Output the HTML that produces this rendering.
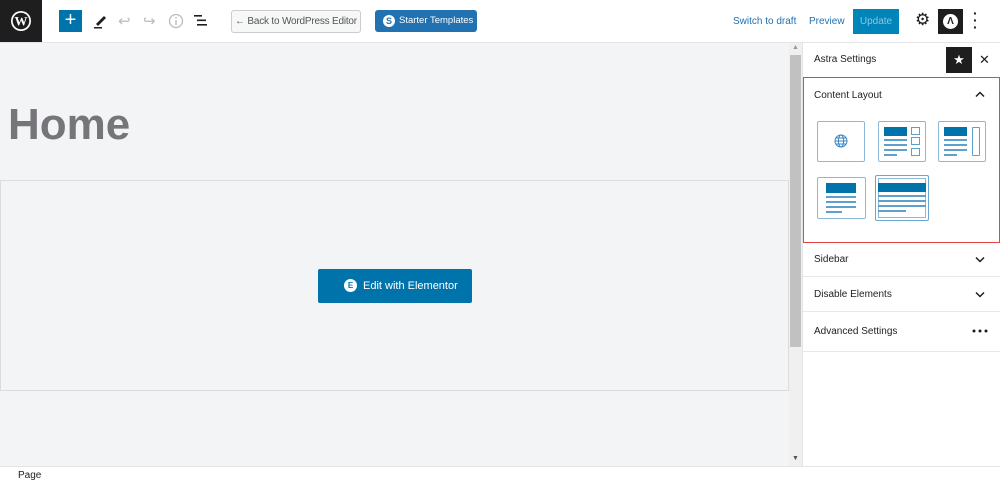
<!DOCTYPE html>
<html><head><style>
*{margin:0;padding:0;box-sizing:border-box}
body{width:1000px;height:484px;overflow:hidden;font-family:"Liberation Sans",sans-serif;background:#fff;position:relative;font-size:11px;color:#1e1e1e}
.a{position:absolute;white-space:nowrap}
.top{left:0;top:0;width:1000px;height:43px;background:#fff;border-bottom:1px solid #e2e4e7}
.lay{border:1px solid #8cb8d8;border-radius:2px;background:#fff}
.bar{background:#0073aa;position:absolute}
.ln{background:#5e9fcc;height:1.5px;position:absolute}
.sep{left:803px;width:197px;height:1px;background:#e8e8e8}
</style></head><body>
<div class="a top"></div>
<div class="a" style="left:0;top:0;width:42px;height:42px;background:#1e1e1e"></div>
<svg class="a" style="left:10px;top:10px" width="22" height="22" viewBox="0 0 22 22"><circle cx="11" cy="11" r="10" fill="#fff"/><circle cx="11" cy="11" r="8.3" fill="#1e1e1e"/><text x="11" y="15.5" text-anchor="middle" font-family="Liberation Serif" font-weight="bold" font-size="13" fill="#fff">W</text></svg>
<div class="a" style="left:59px;top:10px;width:23px;height:22px;background:#0073aa;color:#fff;font-size:20px;line-height:21px;text-align:center">+</div>
<svg class="a" style="left:93px;top:13px" width="14" height="16"><path d="M3 11 L11 3 L13 5 L5 13Z" fill="#1e1e1e"/><rect x="1" y="14" width="8" height="1.5" fill="#1e1e1e"/></svg>
<div class="a" style="left:118px;top:12px;color:#bbb;font-size:15px">↩</div>
<div class="a" style="left:143px;top:12px;color:#bbb;font-size:15px">↪</div>
<svg class="a" style="left:168px;top:13px" width="16" height="16"><circle cx="8" cy="8" r="6.5" fill="none" stroke="#bbb" stroke-width="1.3"/><rect x="7.3" y="7" width="1.4" height="5" fill="#bbb"/><rect x="7.3" y="4" width="1.4" height="1.5" fill="#bbb"/></svg>
<svg class="a" style="left:194px;top:14px" width="14" height="13"><rect x="0" y="1" width="8" height="1.6" fill="#1e1e1e"/><rect x="3" y="5.5" width="9" height="1.6" fill="#1e1e1e"/><rect x="3" y="10" width="10" height="1.6" fill="#1e1e1e"/></svg>
<div class="a" style="left:231px;top:10px;width:130px;height:23px;border:1px solid #ccc;border-radius:3px;background:#f6f7f7;color:#555;font-size:10px;line-height:21px;text-align:center;letter-spacing:-0.2px">← Back to WordPress Editor</div>
<div class="a" style="left:375px;top:10px;width:102px;height:22px;background:#2271b1;border-radius:3px;color:#fff;font-size:9.5px;line-height:22px;padding-left:24px">Starter Templates</div>
<div class="a" style="left:383px;top:15px;width:12px;height:12px;border-radius:50%;background:#fff;color:#2271b1;font-size:9px;font-weight:bold;line-height:12px;text-align:center">S</div>
<div class="a" style="left:733px;top:16px;color:#2271b1;font-size:10px">Switch to draft</div>
<div class="a" style="left:809px;top:16px;color:#2271b1;font-size:10px">Preview</div>
<div class="a" style="left:853px;top:9px;width:46px;height:25px;background:#0085ba;color:#8ec5e0;font-size:10px;line-height:25px;text-align:center">Update</div>
<div class="a" style="left:915px;top:10px;font-size:17px">⚙</div>
<div class="a" style="left:938px;top:9px;width:25px;height:25px;background:#1e1e1e"></div>
<div class="a" style="left:943px;top:14px;width:15px;height:15px;border-radius:50%;background:#fff;color:#1e1e1e;font-size:10px;font-weight:bold;line-height:15px;text-align:center">Λ</div>
<div class="a" style="left:973px;top:10px;font-size:14px;font-weight:bold;line-height:7px">·<br>·<br>·</div>

<div class="a" style="left:0;top:43px;width:789px;height:423px;background:#f3f4f6"></div>
<div class="a" style="left:789px;top:43px;width:14px;height:423px;background:#f0f0f0"></div>
<div class="a" style="left:790px;top:55px;width:11px;height:292px;background:#c1c1c1"></div>
<div class="a" style="left:792px;top:455px;font-size:7px;color:#555">▼</div>
<div class="a" style="left:792px;top:44px;font-size:7px;color:#999">▲</div>
<div class="a" style="left:8px;top:100px;font-size:44px;font-weight:bold;color:#76767a">Home</div>
<div class="a" style="left:0;top:180px;width:789px;height:211px;border:1px solid #dcdcde"></div>
<div class="a" style="left:318px;top:269px;width:154px;height:34px;background:#0073aa;border-radius:2px;color:#fff;font-size:11px;line-height:34px;padding-left:45px">Edit with Elementor</div>
<div class="a" style="left:344px;top:279px;width:13px;height:13px;border-radius:50%;background:#fff;color:#0073aa;font-size:8px;font-weight:bold;line-height:13px;text-align:center">E</div>

<div class="a" style="left:0;top:466px;width:1000px;height:18px;background:#fff;border-top:1px solid #e2e4e7"></div>
<div class="a" style="left:18px;top:470px;font-size:10px;color:#1e1e1e">Page</div>

<div class="a" style="left:802px;top:43px;width:1px;height:423px;background:#e2e4e7"></div>
<div class="a" style="left:814px;top:54px;font-size:10px">Astra Settings</div>
<div class="a" style="left:946px;top:47px;width:26px;height:26px;background:#1e1e1e;color:#fff;font-size:13px;line-height:26px;text-align:center">★</div>
<div class="a" style="left:979px;top:52px;font-size:13px">✕</div>
<div class="a" style="left:803px;top:77px;width:197px;height:166px;border:1px solid #e34545"></div>
<div class="a" style="left:814px;top:90px;font-size:10px">Content Layout</div>
<svg class="a" style="left:975px;top:91px" width="10" height="7"><path d="M1 5.5 L5 1.5 L9 5.5" fill="none" stroke="#1e1e1e" stroke-width="1.5"/></svg>

<div class="a lay" style="left:817px;top:121px;width:48px;height:41px"></div>
<svg class="a" style="left:834px;top:134px" width="14" height="14" viewBox="0 0 14 14" fill="none" stroke="#3a86c2" stroke-width="1"><circle cx="7" cy="7" r="6"/><ellipse cx="7" cy="7" rx="2.6" ry="6"/><path d="M1 7H13M2 4H12M2 10H12"/></svg>

<div class="a lay" style="left:878px;top:121px;width:48px;height:41px"></div>
<div class="bar" style="left:884px;top:127px;width:23px;height:9px"></div>
<div class="ln" style="left:884px;top:139px;width:23px"></div><div class="ln" style="left:884px;top:144px;width:23px"></div><div class="ln" style="left:884px;top:149px;width:23px"></div><div class="ln" style="left:884px;top:154px;width:13px"></div>
<div class="a" style="left:911px;top:127px;width:9px;height:8px;border:1px solid #5e9fcc"></div>
<div class="a" style="left:911px;top:137px;width:9px;height:8px;border:1px solid #5e9fcc"></div>
<div class="a" style="left:911px;top:148px;width:9px;height:8px;border:1px solid #5e9fcc"></div>

<div class="a lay" style="left:938px;top:121px;width:48px;height:41px"></div>
<div class="bar" style="left:944px;top:127px;width:23px;height:9px"></div>
<div class="ln" style="left:944px;top:139px;width:23px"></div><div class="ln" style="left:944px;top:144px;width:23px"></div><div class="ln" style="left:944px;top:149px;width:23px"></div><div class="ln" style="left:944px;top:154px;width:13px"></div>
<div class="a" style="left:972px;top:127px;width:8px;height:29px;border:1px solid #5e9fcc;border-radius:1px"></div>

<div class="a lay" style="left:817px;top:177px;width:49px;height:42px"></div>
<div class="bar" style="left:826px;top:183px;width:30px;height:10px"></div>
<div class="ln" style="left:826px;top:196px;width:30px"></div><div class="ln" style="left:826px;top:201px;width:30px"></div><div class="ln" style="left:826px;top:206px;width:30px"></div><div class="ln" style="left:826px;top:211px;width:16px"></div>

<div class="a lay" style="left:875px;top:175px;width:54px;height:46px;border-color:#6aa6d2;box-shadow:inset 0 0 0 2px #fff,inset 0 0 0 3px #8cb8d8"></div>
<div class="bar" style="left:878px;top:183px;width:48px;height:9px"></div>
<div class="ln" style="left:878px;top:195px;width:48px"></div><div class="ln" style="left:878px;top:200px;width:48px"></div><div class="ln" style="left:878px;top:205px;width:48px"></div><div class="ln" style="left:878px;top:210px;width:28px"></div>

<div class="a" style="left:814px;top:254px;font-size:10px">Sidebar</div>
<svg class="a" style="left:975px;top:256px" width="10" height="7"><path d="M1 1.5 L5 5.5 L9 1.5" fill="none" stroke="#1e1e1e" stroke-width="1.5"/></svg>
<div class="a sep" style="top:276px"></div>
<div class="a" style="left:814px;top:289px;font-size:10px">Disable Elements</div>
<svg class="a" style="left:975px;top:291px" width="10" height="7"><path d="M1 1.5 L5 5.5 L9 1.5" fill="none" stroke="#1e1e1e" stroke-width="1.5"/></svg>
<div class="a sep" style="top:311px"></div>
<div class="a" style="left:814px;top:326px;font-size:10px">Advanced Settings</div>
<svg class="a" style="left:972px;top:329px" width="16" height="4"><circle cx="2" cy="2" r="1.5" fill="#1e1e1e"/><circle cx="8" cy="2" r="1.5" fill="#1e1e1e"/><circle cx="14" cy="2" r="1.5" fill="#1e1e1e"/></svg>
<div class="a sep" style="top:351px"></div>
</body></html>
